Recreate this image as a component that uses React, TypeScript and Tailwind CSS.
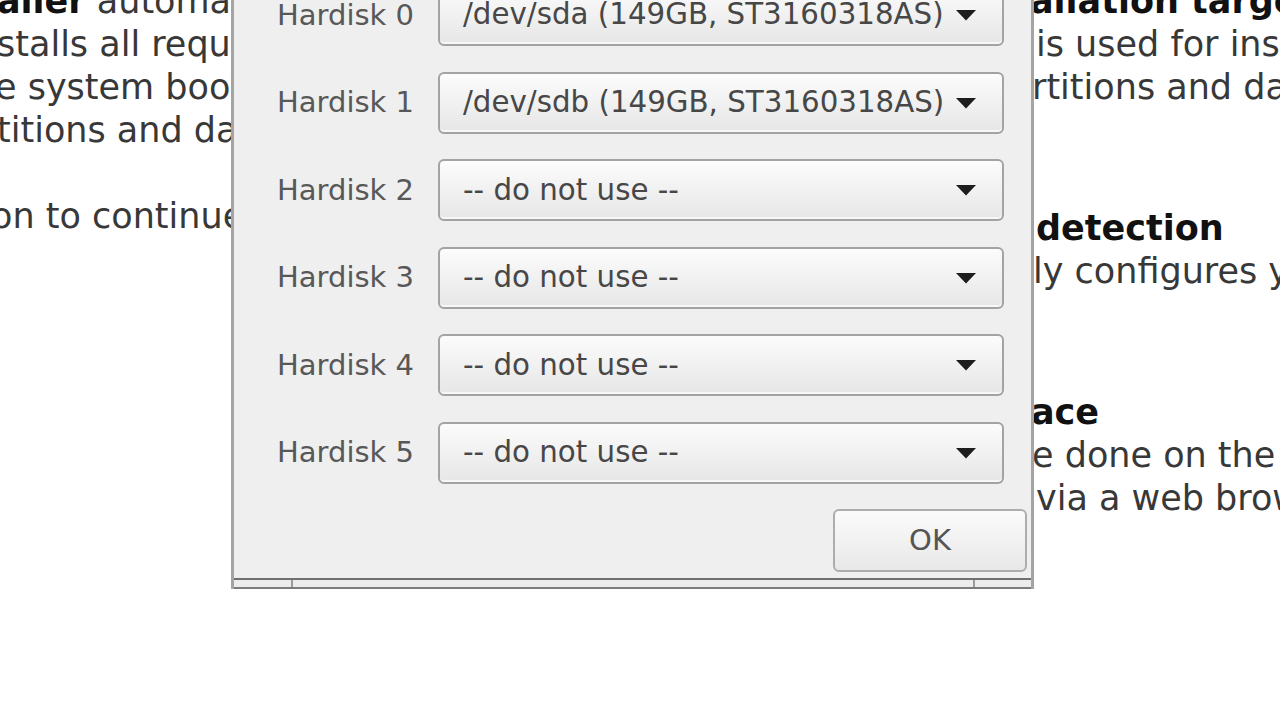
import React from 'react';

const disks = [
  '/dev/sda (149GB, ST3160318AS)',
  '/dev/sdb (149GB, ST3160318AS)',
  '-- do not use --',
  '-- do not use --',
  '-- do not use --',
  '-- do not use --',
];

function Arrow() {
  return (
    <svg width="22" height="12" viewBox="0 0 22 12" className="shrink-0">
      <polygon points="1,1 21,1 11,11.5" fill="#1d1d1d" />
    </svg>
  );
}

function Combo({ value }: { value: string }) {
  return (
    <div className="flex h-[62px] w-[566px] items-center justify-between rounded-[6px] border-2 border-[#a3a3a3] bg-linear-to-b from-[#fcfcfc] via-[#f1f1f1] to-[#e6e6e6] pl-[23px] pr-[25px] shadow-[inset_0_-2px_0_#f7f7f7]">
      <span className="whitespace-nowrap text-[29.3px] leading-none text-[#474747]">{value}</span>
      <Arrow />
    </div>
  );
}

export default function App() {
  return (
    <div
      className="relative h-[720px] w-[1280px] overflow-hidden bg-white"
      style={{ fontFamily: '"DejaVu Sans", Verdana, sans-serif' }}
    >
      {/* page behind the dialog */}
      <div className="mt-[-20px] flex text-[35px] leading-[43px] text-[#383838]">
        <div className="ml-[-3px] w-[1039px] shrink-0 whitespace-nowrap">
          <div>
            <b className="text-[#111]">aller</b> automatically partitions your hard disk.
          </div>
          <div>stalls all required packages and finally makes</div>
          <div className="ml-[-2px]">e system bootable from hard disk. All existing</div>
          <div>titions and data will be lost.</div>
          <div>&nbsp;</div>
          <div className="ml-[-6px]">on to continue installation.</div>
        </div>
        <div className="whitespace-nowrap">
          <div className="ml-[-6px] font-bold text-[#111]">allation target</div>
          <div>is used for installation.</div>
          <div className="ml-[-4px]">rtitions and data will be lost.</div>
          <div className="mt-[98px] font-bold text-[#111]">detection</div>
          <div className="ml-[-3px]">ly configures your hardware.</div>
          <div className="ml-[-5px] mt-[98px] font-bold text-[#111]">ace</div>
          <div className="ml-[-4px]">e done on the graphical user</div>
          <div>via a web browser.</div>
        </div>
      </div>

      {/* hard disk dialog */}
      <div className="absolute left-[231px] top-[-40px] w-[803px] border-x-[3px] border-[#a4a4a4] bg-[#efefef]">
        <div className="flex flex-col gap-[25.6px] pl-[43px] pr-[27px] pt-[24px]">
          {disks.map((d, i) => (
            <div key={i} className="flex items-center">
              <span className="w-[161px] shrink-0 text-[29px] leading-none text-[#585858]">Hardisk {i}</span>
              <Combo value={d} />
            </div>
          ))}
        </div>
        <div className="mt-[25px] flex justify-end pr-[4px]">
          <button className="flex h-[63px] w-[194px] items-center justify-center rounded-[6px] border-2 border-[#adadad] bg-linear-to-b from-[#fbfbfb] to-[#e8e8e8] text-[29px] leading-none text-[#555]">
            OK
          </button>
        </div>
        <div className="mt-[6px] flex h-[11px] border-y-2 border-t-[#707070] border-b-[#7c7c7c] bg-[#ececec]">
          <div className="w-[57px]" />
          <div className="w-[2px] bg-[#9a9a9a]" />
          <div className="flex-1" />
          <div className="w-[2px] bg-[#9a9a9a]" />
          <div className="w-[56px]" />
        </div>
      </div>
    </div>
  );
}
